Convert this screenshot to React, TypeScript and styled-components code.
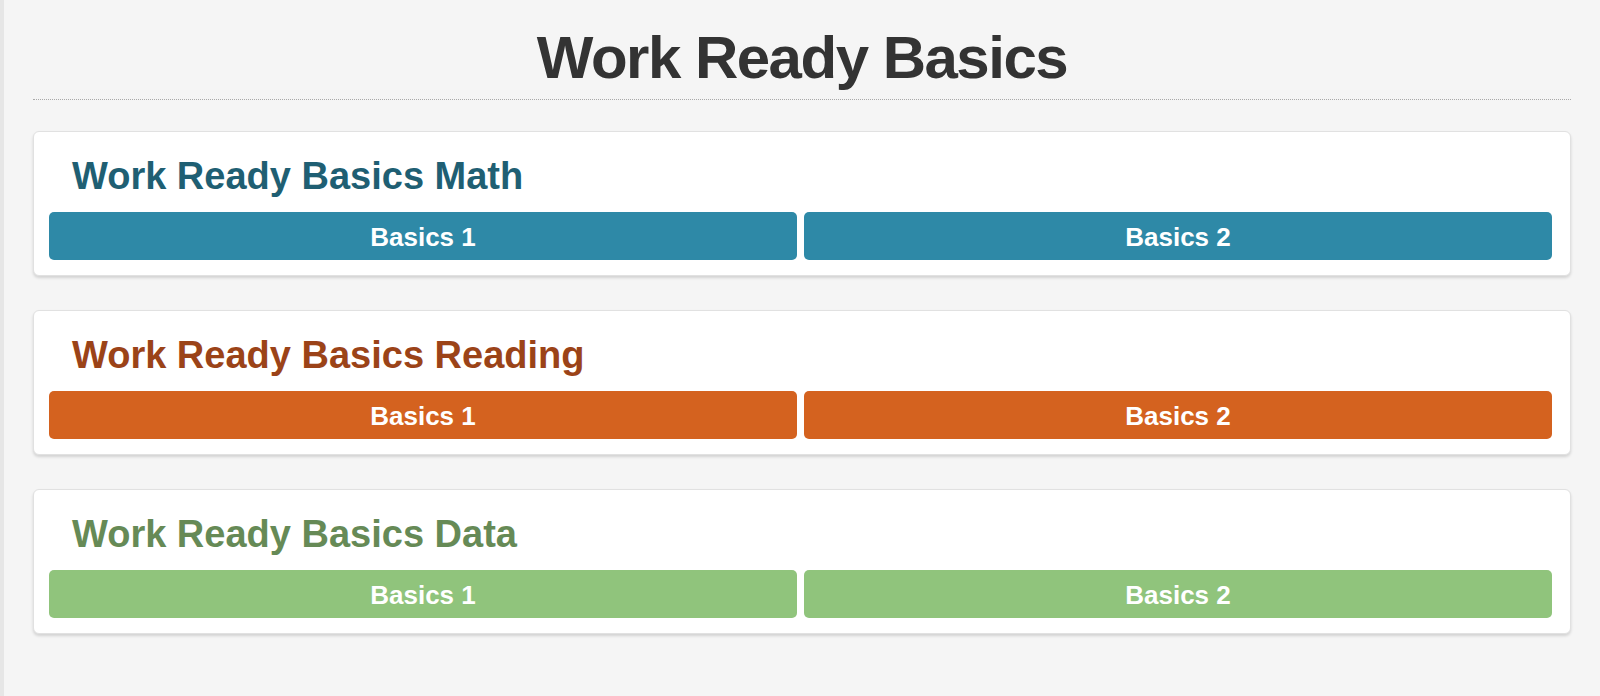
import React from "react";
import styled, { createGlobalStyle } from "styled-components";

const GlobalStyle = createGlobalStyle`
  html, body {
    margin: 0;
    padding: 0;
    background: #f5f5f5;
  }
  body {
    font-family: "Liberation Sans", Arial, Helvetica, sans-serif;
  }
`;

type Tone = "math" | "reading" | "data";

const palette: Record<Tone, { title: string; button: string }> = {
  math: { title: "#1f5f73", button: "#2e89a7" },
  reading: { title: "#9b4318", button: "#d4621f" },
  data: { title: "#668a56", button: "#90c47c" },
};

const sections: { tone: Tone; name: string }[] = [
  { tone: "math", name: "Work Ready Basics Math" },
  { tone: "reading", name: "Work Ready Basics Reading" },
  { tone: "data", name: "Work Ready Basics Data" },
];

function App() {
  return (
    <>
      <GlobalStyle />
      <StPage>
        <StHeading>Work Ready Basics</StHeading>
        <StList>
          {sections.map((section) => (
            <StCard key={section.tone}>
              <StCardTitle $tone={section.tone}>{section.name}</StCardTitle>
              <StButtonRow>
                <StLevelButton $tone={section.tone}>Basics 1</StLevelButton>
                <StLevelButton $tone={section.tone}>Basics 2</StLevelButton>
              </StButtonRow>
            </StCard>
          ))}
        </StList>
      </StPage>
    </>
  );
}

const StPage = styled.div`
  min-height: 696px;
  box-sizing: border-box;
  border-left: 4px solid #e6e6e6;
  padding: 23px 29px 40px;
`;

const StHeading = styled.h1`
  margin: 0;
  padding-bottom: 7px;
  border-bottom: 1px dotted #a9a9a9;
  font-size: 60px;
  line-height: 69px;
  letter-spacing: -1.5px;
  font-weight: 700;
  color: #333333;
  text-align: center;
`;

const StList = styled.div`
  display: flex;
  flex-direction: column;
  gap: 34px;
  margin-top: 31px;
`;

const StCard = styled.section`
  background: #ffffff;
  border: 1px solid #e1e1e1;
  border-radius: 6px;
  box-shadow: 0 2px 3px rgba(0, 0, 0, 0.14);
  padding: 22px 18px 15px 15px;
`;

const StCardTitle = styled.h2<{ $tone: Tone }>`
  margin: 0 0 14px 23px;
  font-size: 38px;
  line-height: 44px;
  font-weight: 700;
  color: ${(p) => palette[p.$tone].title};
`;

const StButtonRow = styled.div`
  display: grid;
  grid-template-columns: 1fr 1fr;
  gap: 7px;
`;

const StLevelButton = styled.button<{ $tone: Tone }>`
  height: 48px;
  padding: 2px 0 0;
  border: 0;
  border-radius: 5px;
  background: ${(p) => palette[p.$tone].button};
  color: #ffffff;
  font-family: "Liberation Sans", Arial, Helvetica, sans-serif;
  font-size: 26px;
  font-weight: 700;
  cursor: pointer;
`;

export default App;
